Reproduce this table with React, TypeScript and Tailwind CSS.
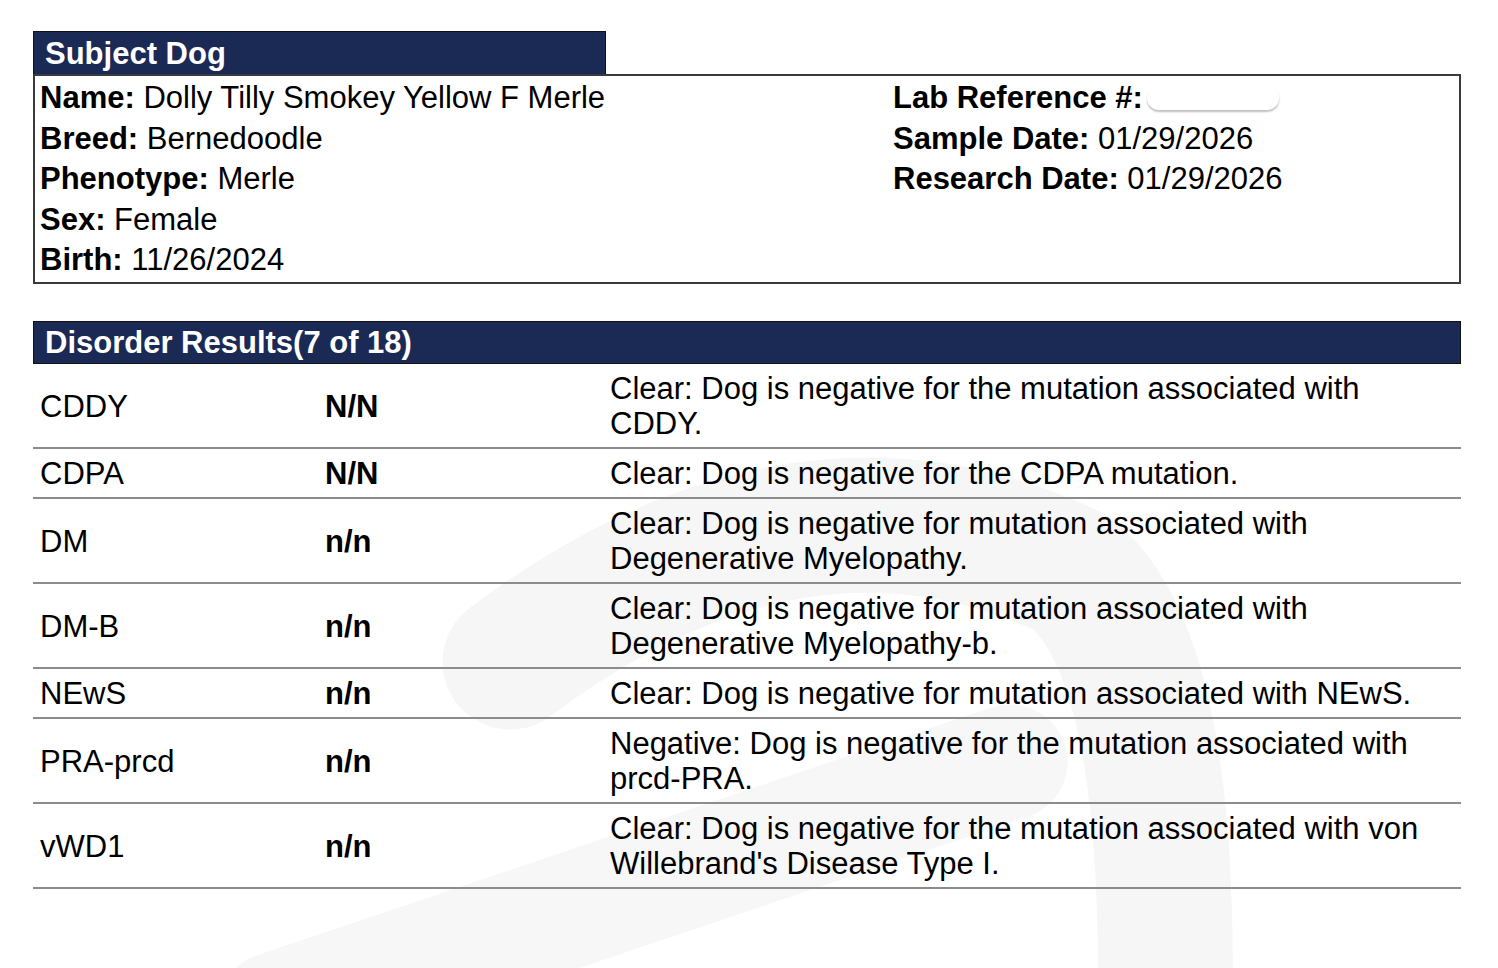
const subject = [
  ['Name:', 'Dolly Tilly Smokey Yellow F Merle'],
  ['Breed:', 'Bernedoodle'],
  ['Phenotype:', 'Merle'],
  ['Sex:', 'Female'],
  ['Birth:', '11/26/2024'],
];

const results = [
  ['CDDY', 'N/N', 'Clear: Dog is negative for the mutation associated with CDDY.'],
  ['CDPA', 'N/N', 'Clear: Dog is negative for the CDPA mutation.'],
  ['DM', 'n/n', 'Clear: Dog is negative for mutation associated with Degenerative Myelopathy.'],
  ['DM-B', 'n/n', 'Clear: Dog is negative for mutation associated with Degenerative Myelopathy-b.'],
  ['NEwS', 'n/n', 'Clear: Dog is negative for mutation associated with NEwS.'],
  ['PRA-prcd', 'n/n', 'Negative: Dog is negative for the mutation associated with prcd-PRA.'],
  ['vWD1', 'n/n', "Clear: Dog is negative for the mutation associated with von Willebrand's Disease Type I."],
];

function Watermark() {
  return (
    <svg className="absolute inset-0 w-full h-full" viewBox="0 0 1498 968" fill="none">
      <path d="M510 662 Q800 445 1070 572 Q1170 650 1165 1000" stroke="#f6f6f6" strokeWidth="135" strokeLinecap="round" />
      <path d="M275 1010 L1010 762" stroke="#f7f7f7" strokeWidth="115" strokeLinecap="round" />
    </svg>
  );
}

export default function App() {
  return (
    <div className="relative w-[1498px] h-[968px] bg-white overflow-hidden text-black font-['Liberation_Sans',Arial,sans-serif] text-[31px]">
      <Watermark />
      <div className="relative px-[33px] pt-[31px]">
        {/* Subject Dog */}
        <div className="w-[573px] h-[43px] bg-[#1b2a55] border border-[#111] border-b-0 flex items-center pl-[11px] text-white font-bold leading-none">
          Subject Dog
        </div>
        <div className="w-[1428px] h-[210px] border-2 border-[#3a3a3a] flex pt-[2px] pl-[5px] leading-[40.5px]">
          <div className="w-[853px]">
            {subject.map(([k, v]) => (
              <div key={k}>
                <span className="font-bold">{k}</span> {v}
              </div>
            ))}
          </div>
          <div>
            <div className="flex items-center">
              <span className="font-bold">Lab Reference #:</span>
              <span className="ml-[4px] w-[132px] h-[24px] rounded-full bg-white shadow-[0_2px_2px_rgba(0,0,0,0.25)]" />
            </div>
            <div>
              <span className="font-bold">Sample Date:</span> 01/29/2026
            </div>
            <div>
              <span className="font-bold">Research Date:</span> 01/29/2026
            </div>
          </div>
        </div>

        {/* Disorder results */}
        <div className="mt-[37px] w-[1428px] h-[43px] bg-[#1b2a55] border border-[#111] flex items-center pl-[11px] text-white font-bold leading-none">
          Disorder Results(7 of 18)
        </div>
        <div className="w-[1428px]">
          {results.map(([name, gt, desc]) => (
            <div key={name} className="flex items-center border-b-2 border-[#8c8c8c] pt-[7px] pb-[6px] leading-[35px]">
              <div className="w-[292px] pl-[7px]">{name}</div>
              <div className="w-[285px] font-bold">{gt}</div>
              <div className="w-[825px]">{desc}</div>
            </div>
          ))}
        </div>
      </div>
    </div>
  );
}
